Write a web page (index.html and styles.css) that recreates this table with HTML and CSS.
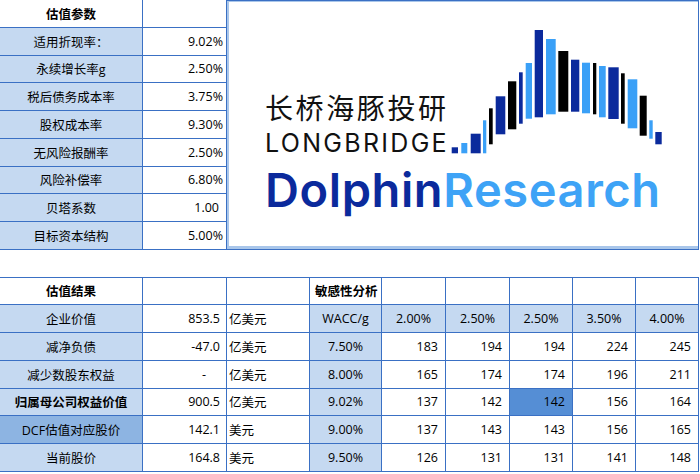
FILE: index.html
```html
<!DOCTYPE html>
<html lang="zh-CN">
<head>
<meta charset="utf-8">
<title>估值参数</title>
<link rel="stylesheet" href="styles.css">
</head>
<body>
<div class="sheet">
  <div class="top">
    <div class="params">
      <div class="c h lab-w">估值参数</div><div class="c end"></div>
      <div class="c lab">适用折现率：</div><div class="c num pct end">9.02%</div>
      <div class="c lab">永续增长率g</div><div class="c num pct end">2.50%</div>
      <div class="c lab">税后债务成本率</div><div class="c num pct end">3.75%</div>
      <div class="c lab">股权成本率</div><div class="c num pct end">9.30%</div>
      <div class="c lab">无风险报酬率</div><div class="c num pct end">2.50%</div>
      <div class="c lab">风险补偿率</div><div class="c num pct end">6.80%</div>
      <div class="c lab">贝塔系数</div><div class="c num end">1.00</div>
      <div class="c lab">目标资本结构</div><div class="c num pct end">5.00%</div>
    </div>
    <div class="logo">
      <div class="logo-row">
        <div class="logo-text">
          <div class="cn">长桥海豚投研</div>
          <div class="en">LONGBRIDGE</div>
        </div>
        <svg class="bars" width="212" height="126" viewBox="0 0 212 126">
          <g fill="#0b2a9c">
            <rect x="0.7" y="117.3" width="6.3" height="6"/>
            <rect x="19.7" y="103.7" width="10" height="19.6"/>
            <rect x="44.7" y="66.3" width="9.6" height="38"/>
            <rect x="68" y="42.3" width="3.7" height="51.4"/>
            <rect x="83.7" y="0" width="8.3" height="87.3"/>
            <rect x="120" y="29.7" width="8.3" height="52"/>
            <rect x="157.3" y="37.3" width="10.4" height="51.7"/>
            <rect x="204.3" y="102" width="6.4" height="12.3"/>
          </g>
          <g fill="#3aa0f7">
            <rect x="10.3" y="113" width="6" height="10.3"/>
            <rect x="32" y="90.3" width="3.3" height="33"/>
            <rect x="74.7" y="33" width="6.3" height="55.7"/>
            <rect x="95" y="9" width="9.7" height="75.3"/>
            <rect x="131" y="32.7" width="8" height="50.6"/>
            <rect x="148" y="36" width="6.7" height="51.3"/>
            <rect x="176.7" y="49.3" width="9.6" height="49"/>
            <rect x="198.3" y="90.3" width="3.4" height="18.4"/>
          </g>
          <g fill="#000">
            <rect x="38" y="78.3" width="3.7" height="36"/>
            <rect x="57" y="51.3" width="8.3" height="48"/>
            <rect x="107.3" y="21" width="10" height="60.7"/>
            <rect x="142" y="33" width="3.3" height="51.3"/>
            <rect x="170" y="43.3" width="3.7" height="50.4"/>
            <rect x="188.7" y="65.7" width="7" height="40"/>
          </g>
        </svg>
      </div>
      <div class="dr"><span class="d1">Dolphin</span><span class="d2">Research</span></div>
    </div>
  </div>
  <div class="blank"></div>
  <div class="results">
    <div class="c h lab-w">估值结果</div><div class="c"></div><div class="c"></div>
    <div class="c h sens">敏感性分析</div><div class="c"></div><div class="c"></div><div class="c"></div><div class="c"></div><div class="c end"></div>

    <div class="c lab">企业价值</div><div class="c num v">853.5</div><div class="c unit">亿美元</div>
    <div class="c lab">WACC/g</div><div class="c lab">2.00%</div><div class="c lab">2.50%</div><div class="c lab">2.50%</div><div class="c lab">3.50%</div><div class="c lab end">4.00%</div>

    <div class="c lab">减净负债</div><div class="c num v">-47.0</div><div class="c unit">亿美元</div>
    <div class="c lab">7.50%</div><div class="c num m">183</div><div class="c num m">194</div><div class="c num m">194</div><div class="c num m">224</div><div class="c num m end">245</div>

    <div class="c lab">减少数股东权益</div><div class="c num dash">-</div><div class="c unit">亿美元</div>
    <div class="c lab">8.00%</div><div class="c num m">165</div><div class="c num m">174</div><div class="c num m">174</div><div class="c num m">196</div><div class="c num m end">211</div>

    <div class="c lab bold">归属母公司权益价值</div><div class="c num v">900.5</div><div class="c unit">亿美元</div>
    <div class="c lab">9.02%</div><div class="c num m">137</div><div class="c num m">142</div><div class="c num m hl">142</div><div class="c num m">156</div><div class="c num m end">164</div>

    <div class="c lab dark">DCF估值对应股价</div><div class="c num v">142.1</div><div class="c unit">美元</div>
    <div class="c lab">9.00%</div><div class="c num m">137</div><div class="c num m">143</div><div class="c num m">143</div><div class="c num m">156</div><div class="c num m end">165</div>

    <div class="c lab">当前股价</div><div class="c num v">164.8</div><div class="c unit">美元</div>
    <div class="c lab">9.50%</div><div class="c num m">126</div><div class="c num m">131</div><div class="c num m">131</div><div class="c num m">141</div><div class="c num m end">148</div>
  </div>
</div>
</body>
</html>
```

FILE: styles.css
```css
* { box-sizing: border-box; }
html, body { margin: 0; padding: 0; background: #fff; }
body {
  font-family: "Open Sans", "Noto Sans CJK SC", sans-serif;
  font-size: 12.5px;
  color: #000;
}
.sheet { width: 699px; }
.top { display: flex; height: 249.75px; }
.params {
  display: grid;
  grid-template-columns: 143px 84px;
  grid-auto-rows: 27.75px;
  width: 227px;
}
.c {
  display: flex;
  align-items: center;
  border-bottom: 1px solid #3a70c4;
  border-right: 1px solid #3a70c4;
  white-space: nowrap;
  overflow: hidden;
}
.h { font-weight: 700; }
.lab-w { justify-content: center; background: #fff; }
.lab { justify-content: center; background: #c5d9f1; }
.lab.bold { font-weight: 700; }
.lab.dark { background: #8db4e2; }
.num { justify-content: flex-end; }
.params .num { padding-right: 7px; }
.params .num.pct { padding-right: 3px; }
.v { padding-right: 6px; }
.dash { padding-right: 20px; }
.m { padding-right: 7px; }
.unit { padding-left: 2px; }
.sens { padding-left: 5px; }
.hl { background: #558ed5; }

.logo {
  flex: 1;
  border-top: 1px solid #3a70c4;
  border-right: 1px solid #3a70c4;
  border-bottom: 1px solid #3a70c4;
  box-shadow: inset 2px 1px 0 #a9c6ea, inset 0 -3px 0 #a9c6ea;
  padding: 29px 0 0 38px;
  background: #fff;
}
.logo-row { display: flex; align-items: flex-end; }
.logo-text {
  width: 186px;
  display: flex;
  flex-direction: column;
}
.cn {
  font-family: "Noto Sans CJK SC", sans-serif;
  font-size: 28px;
  line-height: 28px;
  letter-spacing: 2.6px;
  color: #111;
  margin-bottom: 10px;
}
.en {
  font-family: "Inter", sans-serif;
  font-size: 25px;
  line-height: 25px;
  letter-spacing: 2.3px;
  color: #111;
}
.bars { display: block; }
.dr {
  margin-top: 10px;
  font-family: "Inter", sans-serif;
  font-weight: 600;
  font-size: 47px;
  line-height: 47px;
  letter-spacing: 0.6px;
  white-space: nowrap;
}
.d1 { color: #0b2a9c; }
.d2 { color: #3ea3f6; }

.blank {
  height: 27.75px;
  border-bottom: 1px solid #3a70c4;
}
.results {
  display: grid;
  grid-template-columns: 143px 84px 83px 72px 64px 64px 63px 63px 63px;
  grid-auto-rows: 27.75px;
}
```
